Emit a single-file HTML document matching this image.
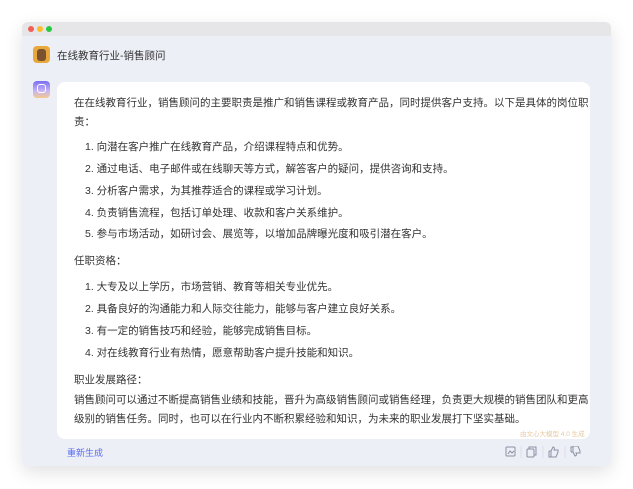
<!DOCTYPE html><html><head><meta charset="utf-8"><style>
body{margin:0;width:633px;height:489px;background:#fff;font-family:"Liberation Sans","Noto Sans CJK SC",sans-serif;overflow:hidden;position:relative}
.win{position:absolute;left:22px;top:22px;width:589px;height:444px;background:#edeff6;border-radius:6px;box-shadow:0 6px 18px rgba(0,0,0,.12);overflow:hidden}
.bar{height:14px;background:#e6e6e8;position:relative}
.dot{position:absolute;top:4px;width:6px;height:6px;border-radius:50%}
.t{position:absolute;font-size:11px;color:#333;white-space:nowrap}
.card{position:absolute;left:35px;top:60px;width:533px;height:357px;background:#fff;border-radius:8px}
.l{position:absolute;left:17px;font-size:10.5px;color:#333;white-space:nowrap}
</style></head><body>
<div class="win">
<div class="bar"><span class="dot" style="left:6px;background:#f25f57"></span><span class="dot" style="left:15px;background:#fbbc2e"></span><span class="dot" style="left:24px;background:#28c840"></span></div>
<div style="position:absolute;left:11px;top:24px;width:17px;height:17px;border-radius:4px;background:#e9a93a"><div style="position:absolute;left:4px;top:3px;width:9px;height:12px;background:#7a5230;border-radius:3px"></div></div>
<div class="t" style="left:35px;top:26px;font-size:10.5px">在线教育行业-销售顾问</div>
<div style="position:absolute;left:11px;top:59px;width:17px;height:17px;border-radius:4px;background:linear-gradient(#7b6ef0,#c9b6f5 60%,#f4c98a)"><div style="position:absolute;left:4px;top:3px;width:7px;height:7px;border:1.5px solid #fff;border-radius:3px"></div></div>
<div class="card">
<div class="l" style="top:13px">在在线教育行业，销售顾问的主要职责是推广和销售课程或教育产品，同时提供客户支持。以下是具体的岗位职</div>
<div class="l" style="top:32px">责：</div>
<div class="l" style="left:28px;top:57px">1. 向潜在客户推广在线教育产品，介绍课程特点和优势。</div>
<div class="l" style="left:28px;top:79px">2. 通过电话、电子邮件或在线聊天等方式，解答客户的疑问，提供咨询和支持。</div>
<div class="l" style="left:28px;top:101px">3. 分析客户需求，为其推荐适合的课程或学习计划。</div>
<div class="l" style="left:28px;top:123px">4. 负责销售流程，包括订单处理、收款和客户关系维护。</div>
<div class="l" style="left:28px;top:144px">5. 参与市场活动，如研讨会、展览等，以增加品牌曝光度和吸引潜在客户。</div>
<div class="l" style="top:171px">任职资格：</div>
<div class="l" style="left:28px;top:197px">1. 大专及以上学历，市场营销、教育等相关专业优先。</div>
<div class="l" style="left:28px;top:219px">2. 具备良好的沟通能力和人际交往能力，能够与客户建立良好关系。</div>
<div class="l" style="left:28px;top:241px">3. 有一定的销售技巧和经验，能够完成销售目标。</div>
<div class="l" style="left:28px;top:263px">4. 对在线教育行业有热情，愿意帮助客户提升技能和知识。</div>
<div class="l" style="top:290px">职业发展路径：</div>
<div class="l" style="top:310px">销售顾问可以通过不断提高销售业绩和技能，晋升为高级销售顾问或销售经理，负责更大规模的销售团队和更高</div>
<div class="l" style="top:329px">级别的销售任务。同时，也可以在行业内不断积累经验和知识，为未来的职业发展打下坚实基础。</div>
<div class="l" style="left:463px;top:346px;font-size:6.5px;color:#e6c9a0">由文心大模型 4.0 生成</div>
</div>
<div class="t" style="left:45px;top:424px;font-size:9px;color:#5b6cf0">重新生成</div>
<svg style="position:absolute;left:483px;top:424px" width="80" height="12" viewBox="0 0 80 12" fill="none" stroke="#8a8fa3" stroke-width="1">
<rect x="1" y="1" width="9" height="9" rx="1"/><path d="M3 8l2-3 2 2 2-2"/>
<path d="M16 0v12M38 0v12M60 0v12" stroke="#dde"/>
<rect x="22" y="3" width="7" height="8" rx="1"/><path d="M24 3V1h7v8h-2"/>
<path d="M44 5h2l2-4c1 0 2 1 1 3h4v2l-2 5h-5V5M44 5v6h2"/>
<path d="M66 6h2l2 4c1 0 2-1 1-3h4V5l-2-5h-5v6M66 6V1h2"/>
</svg>
</div>
</body></html>
